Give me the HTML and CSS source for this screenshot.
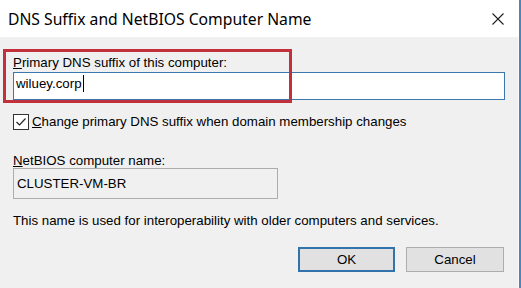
FILE: index.html
```html
<!DOCTYPE html>
<html lang="en">
<head>
    <meta charset="UTF-8">
    <title>DNS Suffix and NetBIOS Computer Name</title>
    <link rel="stylesheet" href="styles.css">
</head>
<body>
    <div class="dialog">
        <div class="titlebar">
            <span class="title">DNS Suffix and NetBIOS Computer Name</span>
            <svg class="close" width="12" height="12" viewBox="0 0 12 12">
                <path d="M0.5 0.5 L11.5 11.5 M11.5 0.5 L0.5 11.5" stroke="#1e1e1e" stroke-width="1.1" fill="none"/>
            </svg>
        </div>

        <div class="content">
            <!-- primary dns suffix -->
            <div class="field suffix">
                <div class="label"><u>P</u>rimary DNS suffix of this computer:</div>
                <div class="textbox focused">wiluey.corp<span class="caret"></span></div>
                <div class="callout"></div>
            </div>

            <div class="check">
                <span class="box">
                    <svg width="14" height="14" viewBox="0 0 14 14">
                        <path d="M2.5 7 L5.5 10 L11.5 3.5" stroke="#222" stroke-width="1.2" fill="none"/>
                    </svg>
                </span>
                <span><u>C</u>hange primary DNS suffix when domain membership changes</span>
            </div>

            <!-- netbios -->
            <div class="field netbios">
                <div class="label"><u>N</u>etBIOS computer name:</div>
                <div class="textbox readonly">CLUSTER-VM-BR</div>
            </div>

            <p class="note">This name is used for interoperability with older computers and services.</p>

            <div class="buttons">
                <button class="btn btn-default">OK</button>
                <button class="btn">Cancel</button>
            </div>
        </div>
    </div>
</body>
</html>
```

FILE: styles.css
```css
html, body {
    margin: 0;
    padding: 0;
    overflow: hidden;
}
body {
    font-family: 'Liberation Sans', Arial, sans-serif;
    font-size: 13.3px;
    color: #000;
    background: #f0f0f0;
}
.dialog {
    width: 521px;
    height: 288px;
    box-sizing: border-box;
    background: #f0f0f0;
    border-right: 2px solid #4a86bd;
    box-shadow: inset -1px 0 0 #f7f9fb;
}
.titlebar {
    height: 37px;
    background: #fff;
    display: flex;
    align-items: center;
    justify-content: space-between;
    padding: 0 15px 0 8px;
}
.title {
    font-family: 'Noto Sans', sans-serif;
    font-size: 15.7px;
    color: #000;
    margin-top: 1px;
}
.close {
    display: block;
}
.content {
    padding: 0 14px 0 13px;
}
.field {
    position: relative;
}
.label {
    line-height: 16px;
}
.suffix {
    margin-top: 18px;
}
.textbox {
    box-sizing: border-box;
    border: 1px solid #adadad;
    background: #fff;
    line-height: 16px;
}
.textbox.focused {
    height: 28px;
    margin-top: 1px;
    border-color: #3a78ad;
    padding: 2px 2px 0;
}
.caret {
    display: inline-block;
    width: 1px;
    height: 17px;
    background: #000;
    vertical-align: -4px;
    margin-left: 1px;
}
.callout {
    position: absolute;
    top: -6px;
    left: -10px;
    width: 289px;
    height: 54px;
    box-sizing: border-box;
    border: 3px solid #c2303b;
}
.check {
    display: flex;
    align-items: center;
    height: 16px;
    margin-top: 14px;
    line-height: 16px;
}
.check .box {
    width: 16px;
    height: 16px;
    box-sizing: border-box;
    border: 1px solid #333;
    background: #fff;
    margin-right: 3px;
    display: flex;
    align-items: center;
    justify-content: center;
}
.netbios {
    margin-top: 23px;
}
.netbios .label {
    line-height: 15px;
}
.textbox.readonly {
    width: 265px;
    height: 31px;
    background: #f0f0f0;
    padding-left: 3px;
    line-height: 29px;
}
.note {
    margin: 14px 0 0;
    line-height: 16px;
}
.buttons {
    display: flex;
    justify-content: flex-end;
    gap: 11px;
    margin-top: 18px;
    padding-right: 1px;
}
.btn {
    font-family: 'Liberation Sans', Arial, sans-serif;
    font-size: 13.3px;
    height: 25px;
    width: 98px;
    padding: 0;
    background: #e1e1e1;
    border: 1px solid #adadad;
    color: #000;
}
.btn-default {
    width: 97px;
    border: 2px solid #3373ad;
}
```
